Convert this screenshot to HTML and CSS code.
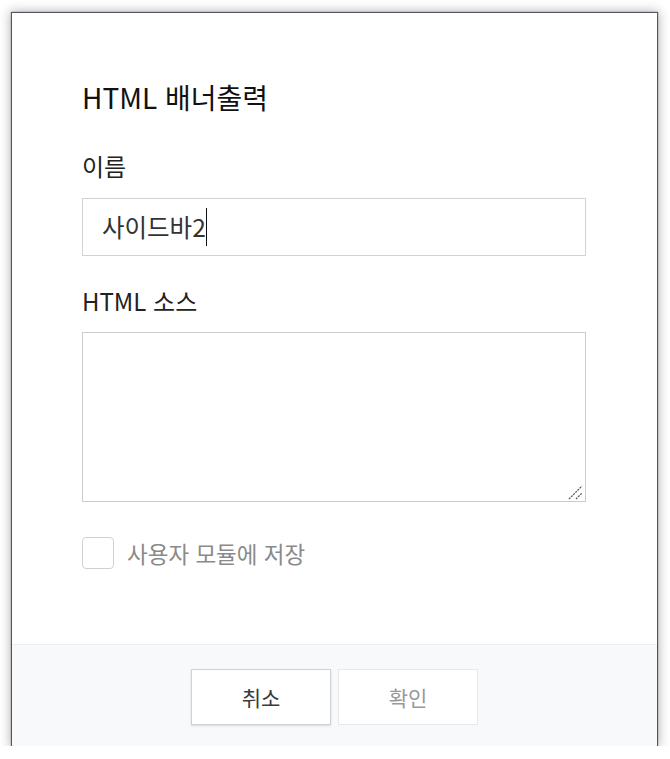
FILE: index.html
```html
<!DOCTYPE html>
<html lang="ko">
<head>
<meta charset="utf-8">
<link rel="stylesheet" href="styles.css">
</head>
<body>
<div class="dialog">
  <div class="dialog-body">
    <h1 class="title">HTML 배너출력</h1>
    <div class="label label-name">이름</div>
    <div class="input"><span class="input-text">사이드바2</span><span class="caret"></span></div>
    <div class="label label-src">HTML 소스</div>
    <div class="textarea-wrap">
      <textarea class="textarea"></textarea>
      <svg class="grip" width="16" height="16" viewBox="0 0 16 16">
        <path d="M1 15 L14 2" stroke="#555" stroke-width="1.3" stroke-dasharray="2 1"/>
        <path d="M8 15 L14 9" stroke="#555" stroke-width="1.3" stroke-dasharray="2 1"/>
      </svg>
    </div>
    <label class="check-row">
      <span class="checkbox"></span>
      <span class="check-label">사용자 모듈에 저장</span>
    </label>
  </div>
  <div class="dialog-footer">
    <button class="btn btn-cancel">취소</button>
    <button class="btn btn-ok">확인</button>
  </div>
</div>
</body>
</html>
```
FILE: styles.css
```css
html, body {
  margin: 0;
  padding: 0;
  background: #ffffff;
}
body {
  font-family: "Noto Sans CJK KR", "Noto Sans", sans-serif;
  color: #222;
}
.dialog {
  margin: 13px 0 0 12px;
  width: 645px;
  height: 733px;
  background: #fff;
  display: flex;
  flex-direction: column;
  box-shadow: 0 0 1px 1px rgba(40, 46, 54, 0.75), 0 0 10px 2px rgba(0, 0, 0, 0.28);
}
.dialog-body {
  flex: 1;
  padding: 67px 71px 0 70px;
  display: flex;
  flex-direction: column;
}
.title {
  margin: 0;
  height: 34px;
  line-height: 34px;
  font-size: 28px;
  font-weight: 400;
  color: #111;
}
.label {
  height: 30px;
  line-height: 30px;
  font-size: 24px;
  color: #222;
}
.label-name { margin-top: 37px; }
.label-src { margin-top: 30px; }
.input {
  margin-top: 17px;
  height: 58px;
  box-sizing: border-box;
  border: 1px solid #cfd3d6;
  display: flex;
  align-items: center;
  padding-left: 19px;
}
.input-text {
  font-size: 24.5px;
  color: #333;
  line-height: 30px;
}
.caret {
  display: inline-block;
  width: 1px;
  height: 38px;
  background: #111;
}
.textarea-wrap {
  margin-top: 16px;
  position: relative;
  height: 170px;
}
.textarea {
  display: block;
  margin: 0;
  height: 170px;
  width: 100%;
  box-sizing: border-box;
  border: 1px solid #cccccc;
  padding: 10px;
  font-family: inherit;
  font-size: 18px;
  resize: none;
  outline: none;
}
.grip {
  position: absolute;
  right: 2px;
  bottom: 2px;
}
.check-row {
  margin-top: 35px;
  height: 32px;
  display: flex;
  align-items: center;
  gap: 13px;
}
.checkbox {
  width: 32px;
  height: 32px;
  box-sizing: border-box;
  border: 1px solid #cdd1d5;
  border-radius: 4px;
  background: #fff;
}
.check-label {
  font-size: 22.5px;
  color: #8a8a8a;
  line-height: 30px;
}
.dialog-footer {
  height: 102px;
  box-sizing: border-box;
  border-top: 1px solid #eceef0;
  background: #f8f9fb;
  display: flex;
  justify-content: center;
  align-items: center;
  gap: 7px;
  padding-top: 2px;
}
.btn {
  width: 140px;
  height: 56px;
  box-sizing: border-box;
  background: #fff;
  font-family: inherit;
  font-size: 21px;
  font-weight: 400;
  padding: 0;
}
.btn-cancel {
  border: 1px solid #cfd2d5;
  color: #3a3a3a;
  box-shadow: 0 1px 2px rgba(0, 0, 0, 0.12);
}
.btn-ok {
  border: 1px solid #e6e8ea;
  color: #999;
}
```
